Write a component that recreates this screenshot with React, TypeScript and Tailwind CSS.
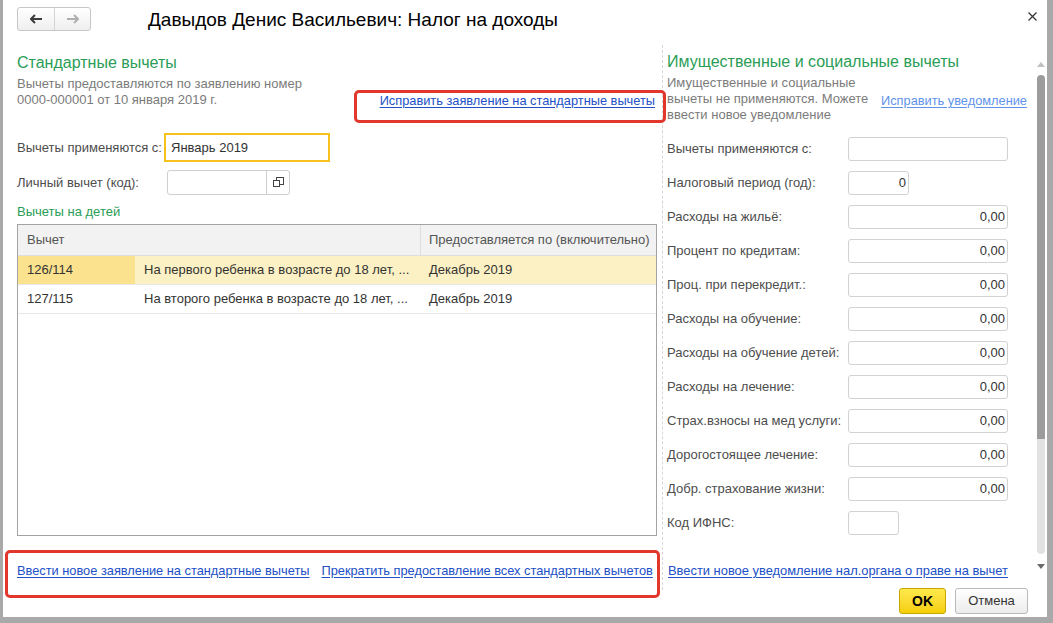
import React from 'react';

const green = 'text-[#2a9d56]';

const rightRows: { label: string; value: string; w: string }[] = [
  { label: 'Вычеты применяются с:', value: '', w: 'w-[160px]' },
  { label: 'Налоговый период (год):', value: '0', w: 'w-[61px]' },
  { label: 'Расходы на жильё:', value: '0,00', w: 'w-[160px]' },
  { label: 'Процент по кредитам:', value: '0,00', w: 'w-[160px]' },
  { label: 'Проц. при перекредит.:', value: '0,00', w: 'w-[160px]' },
  { label: 'Расходы на обучение:', value: '0,00', w: 'w-[160px]' },
  { label: 'Расходы на обучение детей:', value: '0,00', w: 'w-[160px]' },
  { label: 'Расходы на лечение:', value: '0,00', w: 'w-[160px]' },
  { label: 'Страх.взносы на мед услуги:', value: '0,00', w: 'w-[160px]' },
  { label: 'Дорогостоящее лечение:', value: '0,00', w: 'w-[160px]' },
  { label: 'Добр. страхование жизни:', value: '0,00', w: 'w-[160px]' },
  { label: 'Код ИФНС:', value: '', w: 'w-[51px]' },
];

const children = [
  { code: '126/114', name: 'На первого ребенка в возрасте до 18 лет, ...', till: 'Декабрь 2019', active: true },
  { code: '127/115', name: 'На второго ребенка в возрасте до 18 лет, ...', till: 'Декабрь 2019', active: false },
];

function NavButtons() {
  return (
    <div className="flex h-[24px] w-[74px] rounded-[3px] border border-[#c6c6c6] bg-gradient-to-b from-white to-[#efefef]">
      <div className="flex w-[37px] items-center justify-center border-r border-[#d4d4d4]">
        <svg width="13" height="10" viewBox="0 0 13 10">
          <path d="M1 5h11M5 1L1 5l4 4" fill="none" stroke="#3c3c3c" strokeWidth="2" />
        </svg>
      </div>
      <div className="flex flex-1 items-center justify-center">
        <svg width="13" height="10" viewBox="0 0 13 10">
          <path d="M1 5h11M8 1l4 4-4 4" fill="none" stroke="#b0b0b0" strokeWidth="2" />
        </svg>
      </div>
    </div>
  );
}

function Scrollbar() {
  return (
    <div className="ml-[9px] mt-[18px] flex h-[515px] w-[8px] flex-col items-center">
      <svg width="8" height="5" viewBox="0 0 8 5" className="mt-[4px]">
        <path d="M0 5L4 0l4 5z" fill="#c0c0c0" />
      </svg>
      <div className="mt-[8px] h-[364px] w-[8px] rounded-t-[4px] bg-[#9c9c9c]" />
      <div className="h-[115px] w-[8px] rounded-b-[4px] bg-[#e2e2e2]" />
      <svg width="8" height="5" viewBox="0 0 8 5" className="mt-[10px]">
        <path d="M0 0h8L4 5z" fill="#6a6a6a" />
      </svg>
    </div>
  );
}

export default function App() {
  return (
    <div
      className="relative h-[623px] w-[1053px] overflow-hidden border-b-[6px] border-l-[3px] border-r-[6px] border-[#a9a9a9] bg-white text-[13px] text-[#4d4d4d]"
      style={{ fontFamily: '"Liberation Sans", Arial, sans-serif' }}
    >
      {/* header */}
      <div className="flex h-[40px] items-start pl-[14px] pt-[7px]">
        <NavButtons />
        <div className="ml-[57px] mt-[1px] text-[19px] leading-[23px] text-black">
          Давыдов Денис Васильевич: Налог на доходы
        </div>
        <svg width="9" height="9" viewBox="0 0 9 9" className="ml-auto mr-[10px] mt-[5px]">
          <path d="M0.5 0.5l8 8M8.5 0.5l-8 8" stroke="#333" strokeWidth="1.2" />
        </svg>
      </div>

      {/* body */}
      <div className="flex h-[540px] pl-[14px]">
        {/* left column */}
        <div className="flex w-[640px] flex-col">
          <div className={`mt-[13px] h-[20px] text-[16px] leading-[20px] ${green}`}>Стандартные вычеты</div>
          <div className="mt-[3px] flex h-[32px] items-end">
            <div className="leading-[16px] text-[#7b7b7b]">
              Вычеты предоставляются по заявлению номер
              <br />
              0000-000001 от 10 января 2019 г.
            </div>
            <a className="mb-[-1px] ml-auto mr-[2px] whitespace-nowrap text-[12.8px] leading-[16px] text-[#2150c6] underline underline-offset-2">
              Исправить заявление на стандартные вычеты
            </a>
          </div>

          <div className="mt-[25px] flex h-[29px] items-center">
            <div className="w-[147px]">Вычеты применяются с:</div>
            <div className="flex h-[29px] w-[166px] items-center border-2 border-[#f4c21a] pl-[5px] text-[#333]">
              Январь 2019
            </div>
          </div>

          <div className="mt-[8px] flex h-[25px] items-center">
            <div className="w-[150px]">Личный вычет (код):</div>
            <div className="flex h-[25px] w-[123px] rounded-[3px] border border-[#cfcfcf]">
              <div className="flex-1" />
              <div className="flex w-[23px] items-center justify-center border-l border-[#cfcfcf]">
                <svg width="11" height="11" viewBox="0 0 11 11">
                  <rect x="3.5" y="0.5" width="7" height="7" fill="white" stroke="#444" />
                  <rect x="0.5" y="3.5" width="6" height="6" fill="white" stroke="#444" />
                </svg>
              </div>
            </div>
          </div>

          <div className={`mt-[9px] h-[16px] leading-[16px] ${green}`}>Вычеты на детей</div>

          <div className="mt-[4px] h-[312px] border border-[#a3a3a3] text-[#333]">
            <div className="flex h-[31px] border-b border-[#dedede] bg-[#f2f2f2] text-[#555]">
              <div className="flex w-[403px] items-center border-r border-[#dedede] pl-[9px]">Вычет</div>
              <div className="flex flex-1 items-center pl-[8px]">Предоставляется по (включительно)</div>
            </div>
            {children.map((c) => (
              <div
                key={c.code}
                className={`flex h-[29px] border-b border-[#e6e6e6] ${c.active ? 'bg-[#fcf1c4]' : 'bg-white'}`}
              >
                <div className={`flex w-[117px] items-center pl-[9px] ${c.active ? 'bg-[#fbe28e]' : ''}`}>{c.code}</div>
                <div className="flex w-[286px] items-center pl-[9px]">{c.name}</div>
                <div className="flex flex-1 items-center pl-[8px]">{c.till}</div>
              </div>
            ))}
          </div>

          <div className="mt-[27px] flex h-[16px] items-center gap-[12px] whitespace-nowrap text-[12.8px] leading-[16px] text-[#2150c6]">
            <a className="underline underline-offset-2">Ввести новое заявление на стандартные вычеты</a>
            <a className="underline underline-offset-2">Прекратить предоставление всех стандартных вычетов</a>
          </div>
        </div>

        {/* divider */}
        <div className="ml-[5px] mt-[5px] h-[545px] border-l border-dashed border-[#d6d6d6]" />

        {/* right column */}
        <div className="ml-[4px] flex w-[361px] flex-col">
          <div className={`mt-[12px] h-[20px] text-[16px] leading-[20px] ${green}`}>
            Имущественные и социальные вычеты
          </div>
          <div className="mt-[3px] flex h-[48px] items-center">
            <div className="w-[214px] leading-[16px] text-[#7b7b7b]">
              Имущественные и социальные
              <br />
              вычеты не применяются. Можете
              <br />
              ввести новое уведомление
            </div>
            <a className="mt-[4px] whitespace-nowrap text-[12.8px] leading-[16px] text-[#5f93ea] underline underline-offset-2">
              Исправить уведомление
            </a>
          </div>

          <div className="mt-[14px] flex flex-col gap-[10px]">
            {rightRows.map((r) => (
              <div key={r.label} className="flex h-[24px] items-center">
                <div className="w-[181px] whitespace-nowrap">{r.label}</div>
                <div
                  className={`flex h-[24px] items-center justify-end rounded-[3px] border border-[#d2d2d2] pr-[2px] text-[#333] ${r.w}`}
                >
                  {r.value}
                </div>
              </div>
            ))}
          </div>

          <a className="ml-[1px] mt-[28px] h-[16px] whitespace-nowrap text-[12.9px] leading-[16px] text-[#2150c6] underline underline-offset-2">
            Ввести новое уведомление нал.органа о праве на вычет
          </a>
        </div>

        <Scrollbar />
      </div>

      {/* footer */}
      <div className="flex justify-end pr-[19px] pt-[8px]">
        <button className="h-[26px] w-[47px] rounded-[3px] border border-[#c7a600] bg-gradient-to-b from-[#ffe94a] to-[#f5cf00] text-[14px] font-bold text-black">
          OK
        </button>
        <button className="ml-[9px] h-[26px] w-[73px] rounded-[3px] border border-[#b9b9b9] bg-gradient-to-b from-white to-[#ececec] text-[13px] text-[#333]">
          Отмена
        </button>
      </div>

      {/* annotation frames */}
      <div className="pointer-events-none absolute left-[351px] top-[90px] h-[33px] w-[312px] rounded-[5px] border-[3px] border-[#e2372c]" />
      <div className="pointer-events-none absolute left-[2px] top-[550px] h-[48px] w-[655px] rounded-[5px] border-[3px] border-[#e2372c]" />
    </div>
  );
}
